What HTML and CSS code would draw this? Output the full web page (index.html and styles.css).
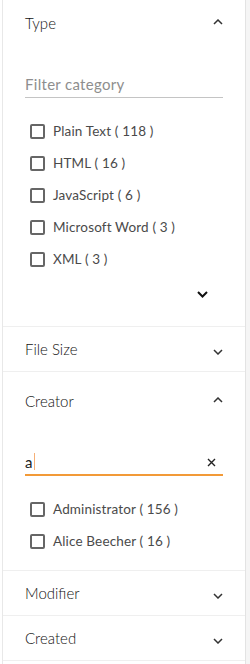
FILE: index.html
```html
<!DOCTYPE html>
<html lang="en">
<head>
    <meta charset="UTF-8">
    <meta name="viewport" content="width=device-width, initial-scale=1.0">
    <title>Filters</title>
    <link rel="stylesheet" href="styles.css">
</head>
<body>
    <div class="page">
        <div class="panel">

            <!-- Type -->
            <div class="section section-first">
                <div class="section-head open">
                    <span class="section-title">Type</span>
                    <svg class="chev" width="10" height="6" viewBox="0 0 10 6"><path d="M1 5 L5 1 L9 5" fill="none" stroke="#333" stroke-width="1.5"/></svg>
                </div>
                <div class="search-box">
                    <span class="placeholder">Filter category</span>
                </div>
                <ul class="check-list">
                    <li><span class="box"></span>Plain Text ( 118 )</li>
                    <li><span class="box"></span>HTML ( 16 )</li>
                    <li><span class="box"></span>JavaScript ( 6 )</li>
                    <li><span class="box"></span>Microsoft Word ( 3 )</li>
                    <li><span class="box"></span>XML ( 3 )</li>
                </ul>
                <div class="more">
                    <svg width="11" height="7" viewBox="0 0 11 7"><path d="M1 1 L5.5 5.5 L10 1" fill="none" stroke="#111" stroke-width="2"/></svg>
                </div>
            </div>

            <!-- File Size -->
            <div class="section">
                <div class="section-head">
                    <span class="section-title">File Size</span>
                    <svg class="chev down" width="10" height="6" viewBox="0 0 10 6"><path d="M1 1 L5 5 L9 1" fill="none" stroke="#333" stroke-width="1.5"/></svg>
                </div>
            </div>

            <!-- Creator -->
            <div class="section">
                <div class="section-head open">
                    <span class="section-title">Creator</span>
                    <svg class="chev" width="10" height="6" viewBox="0 0 10 6"><path d="M1 5 L5 1 L9 5" fill="none" stroke="#333" stroke-width="1.5"/></svg>
                </div>
                <div class="search-box active">
                    <span class="value">a</span><span class="caret"></span>
                    <svg class="clear" width="9" height="9" viewBox="0 0 9 9"><path d="M1 1 L8 8 M8 1 L1 8" fill="none" stroke="#222" stroke-width="1.4"/></svg>
                </div>
                <ul class="check-list short">
                    <li><span class="box"></span>Administrator ( 156 )</li>
                    <li><span class="box"></span>Alice Beecher ( 16 )</li>
                </ul>
            </div>

            <!-- Modifier -->
            <div class="section">
                <div class="section-head">
                    <span class="section-title">Modifier</span>
                    <svg class="chev down" width="10" height="6" viewBox="0 0 10 6"><path d="M1 1 L5 5 L9 1" fill="none" stroke="#333" stroke-width="1.5"/></svg>
                </div>
            </div>

            <!-- Created -->
            <div class="section">
                <div class="section-head">
                    <span class="section-title">Created</span>
                    <svg class="chev down" width="10" height="6" viewBox="0 0 10 6"><path d="M1 1 L5 5 L9 1" fill="none" stroke="#333" stroke-width="1.5"/></svg>
                </div>
            </div>

        </div>
        <div class="track"></div>
    </div>
</body>
</html>
```

FILE: styles.css
```css
body {
    margin: 0;
    padding: 0;
    font-family: Lato, "Open Sans", sans-serif;
    color: #333;
    background: #fff;
}

.page {
    display: flex;
    min-height: 664px;
}

.panel {
    width: 242px;
    margin-left: 2px;
    border-left: 1px solid #e8e8e8;
    border-right: 1px solid #e3e3e3;
    background: #fff;
}

.track {
    flex: 1;
    background: #f5f5f5;
}

.section {
    border-bottom: 1px solid #efefef;
}

.section-head {
    display: flex;
    justify-content: space-between;
    align-items: center;
    height: 44px;
    padding: 0 22px;
}

.section-head.open {
    height: 30px;
    padding-top: 14px;
}

.section-first .section-head.open {
    padding-top: 8px;
}

.section-title {
    font-size: 15px;
    font-weight: 300;
    color: #111;
}

.chev {
    margin-top: -2px;
}

.chev.down {
    margin-top: 6px;
}

.search-box {
    position: relative;
    display: flex;
    align-items: center;
    height: 26px;
    margin: 33px 22px 0;
    border-bottom: 1px solid #c4c4c4;
    font-size: 15px;
    letter-spacing: 0.3px;
}

.search-box.active {
    border-bottom: 2px solid #f29a38;
    height: 25px;
}

.placeholder {
    color: #8e8e8e;
}

.value {
    color: #222;
}

.caret {
    display: inline-block;
    width: 1px;
    height: 17px;
    margin-left: 1px;
    background: #f6b077;
}

.clear {
    position: absolute;
    right: 7px;
    top: 9px;
}

.check-list {
    list-style: none;
    margin: 17px 0 0;
    padding: 0 0 0 27px;
}

.check-list li {
    display: flex;
    align-items: center;
    height: 32px;
    font-size: 13.5px;
    letter-spacing: 0.15px;
    color: #4a4a4a;
}

.check-list.short {
    padding-bottom: 13px;
}

.box {
    width: 11px;
    height: 11px;
    border: 2px solid #666;
    border-radius: 2px;
    margin-right: 8px;
}

.more {
    display: flex;
    justify-content: flex-end;
    align-items: center;
    height: 24px;
    margin-top: 7px;
    padding: 0 37px 20px 0;
}
```
